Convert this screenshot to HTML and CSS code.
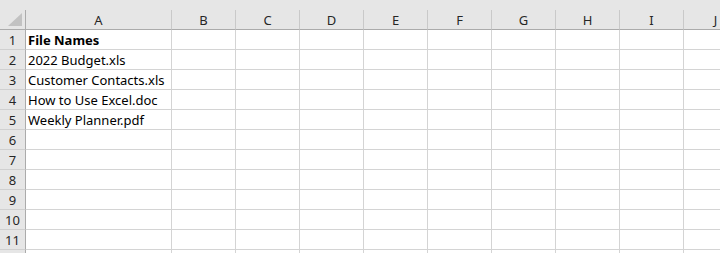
FILE: index.html
```html
<!DOCTYPE html>
<html lang="en">
<head>
    <meta charset="UTF-8">
    <title>File Names</title>
    <link rel="stylesheet" href="styles.css">
</head>
<body>
    <div class="sheet">
        <div class="topstrip"></div>
        <div class="row head">
            <div class="cell corner"><svg width="25" height="19" viewBox="0 0 25 19"><polygon points="22,3 22,16 8,16" fill="#c2c2c2"/></svg></div>
            <div class="cell">A</div><div class="cell">B</div><div class="cell">C</div><div class="cell">D</div><div class="cell">E</div>
            <div class="cell">F</div><div class="cell">G</div><div class="cell">H</div><div class="cell">I</div><div class="cell">J</div>
        </div>
        <div class="row">
            <div class="cell num">1</div><div class="cell bold">File Names</div>
            <div class="cell"></div><div class="cell"></div><div class="cell"></div><div class="cell"></div><div class="cell"></div><div class="cell"></div><div class="cell"></div><div class="cell"></div><div class="cell"></div>
        </div>
        <div class="row">
            <div class="cell num">2</div><div class="cell">2022 Budget.xls</div>
            <div class="cell"></div><div class="cell"></div><div class="cell"></div><div class="cell"></div><div class="cell"></div><div class="cell"></div><div class="cell"></div><div class="cell"></div><div class="cell"></div>
        </div>
        <div class="row">
            <div class="cell num">3</div><div class="cell">Customer Contacts.xls</div>
            <div class="cell"></div><div class="cell"></div><div class="cell"></div><div class="cell"></div><div class="cell"></div><div class="cell"></div><div class="cell"></div><div class="cell"></div><div class="cell"></div>
        </div>
        <div class="row">
            <div class="cell num">4</div><div class="cell">How to Use Excel.doc</div>
            <div class="cell"></div><div class="cell"></div><div class="cell"></div><div class="cell"></div><div class="cell"></div><div class="cell"></div><div class="cell"></div><div class="cell"></div><div class="cell"></div>
        </div>
        <div class="row">
            <div class="cell num">5</div><div class="cell">Weekly Planner.pdf</div>
            <div class="cell"></div><div class="cell"></div><div class="cell"></div><div class="cell"></div><div class="cell"></div><div class="cell"></div><div class="cell"></div><div class="cell"></div><div class="cell"></div>
        </div>
        <div class="row">
            <div class="cell num">6</div><div class="cell"></div>
            <div class="cell"></div><div class="cell"></div><div class="cell"></div><div class="cell"></div><div class="cell"></div><div class="cell"></div><div class="cell"></div><div class="cell"></div><div class="cell"></div>
        </div>
        <div class="row">
            <div class="cell num">7</div><div class="cell"></div>
            <div class="cell"></div><div class="cell"></div><div class="cell"></div><div class="cell"></div><div class="cell"></div><div class="cell"></div><div class="cell"></div><div class="cell"></div><div class="cell"></div>
        </div>
        <div class="row">
            <div class="cell num">8</div><div class="cell"></div>
            <div class="cell"></div><div class="cell"></div><div class="cell"></div><div class="cell"></div><div class="cell"></div><div class="cell"></div><div class="cell"></div><div class="cell"></div><div class="cell"></div>
        </div>
        <div class="row">
            <div class="cell num">9</div><div class="cell"></div>
            <div class="cell"></div><div class="cell"></div><div class="cell"></div><div class="cell"></div><div class="cell"></div><div class="cell"></div><div class="cell"></div><div class="cell"></div><div class="cell"></div>
        </div>
        <div class="row">
            <div class="cell num">10</div><div class="cell"></div>
            <div class="cell"></div><div class="cell"></div><div class="cell"></div><div class="cell"></div><div class="cell"></div><div class="cell"></div><div class="cell"></div><div class="cell"></div><div class="cell"></div>
        </div>
        <div class="row">
            <div class="cell num">11</div><div class="cell"></div>
            <div class="cell"></div><div class="cell"></div><div class="cell"></div><div class="cell"></div><div class="cell"></div><div class="cell"></div><div class="cell"></div><div class="cell"></div><div class="cell"></div>
        </div>
        <div class="row last">
            <div class="cell num"></div><div class="cell"></div>
            <div class="cell"></div><div class="cell"></div><div class="cell"></div><div class="cell"></div><div class="cell"></div><div class="cell"></div><div class="cell"></div><div class="cell"></div><div class="cell"></div>
        </div>
    </div>
</body>
</html>
```

FILE: styles.css
```css
*{margin:0;padding:0;box-sizing:border-box;}
html,body{width:100%;height:100%;overflow:hidden;background:#fff;}
body{font-family:"Noto Sans","Open Sans",sans-serif;font-size:13px;color:#000;}

.sheet{width:720px;height:253px;overflow:hidden;}
.topstrip{height:10px;background:#e6e6e6;}

.row{
    display:grid;
    grid-template-columns:26px 146px repeat(9,64px);
    height:20px;
}
.row.last{height:3px;overflow:hidden;}
.cell{
    height:20px;
    border-right:1px solid #d4d4d4;
    border-bottom:1px solid #d4d4d4;
    padding-left:2px;
    line-height:21px;
    white-space:nowrap;
    overflow:visible;
}
.bold{font-weight:bold;}

/* column headers */
.head .cell{
    background:#e6e6e6;
    color:#262626;
    text-align:center;
    padding-left:0;
    line-height:20px;
    border-right-color:#c9c9c9;
    border-bottom-color:#ababab;
}
.head .corner{border-right-color:#ababab;}
.corner svg{display:block;}

/* row numbers */
.num{
    background:#e6e6e6;
    color:#262626;
    text-align:center;
    padding-left:0;
    border-right-color:#ababab;
    border-bottom-color:#d0d0d0;
}
```
